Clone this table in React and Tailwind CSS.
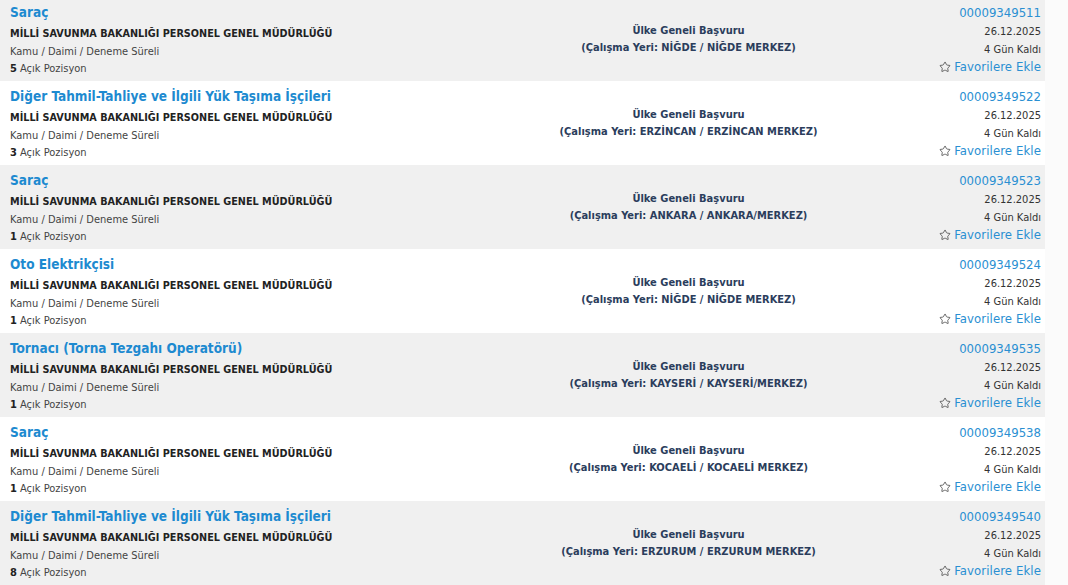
import React from "react";
import { Star } from "lucide-react";

const jobs = [
  { title: "Saraç", count: 5, place: "NİĞDE / NİĞDE MERKEZ", no: "00009349511" },
  { title: "Diğer Tahmil-Tahliye ve İlgili Yük Taşıma İşçileri", count: 3, place: "ERZİNCAN / ERZİNCAN MERKEZ", no: "00009349522" },
  { title: "Saraç", count: 1, place: "ANKARA / ANKARA/MERKEZ", no: "00009349523" },
  { title: "Oto Elektrikçisi", count: 1, place: "NİĞDE / NİĞDE MERKEZ", no: "00009349524" },
  { title: "Tornacı (Torna Tezgahı Operatörü)", count: 1, place: "KAYSERİ / KAYSERİ/MERKEZ", no: "00009349535" },
  { title: "Saraç", count: 1, place: "KOCAELİ / KOCAELİ MERKEZ", no: "00009349538" },
  { title: "Diğer Tahmil-Tahliye ve İlgili Yük Taşıma İşçileri", count: 8, place: "ERZURUM / ERZURUM MERKEZ", no: "00009349540" },
];

function JobRow({ job, shaded }) {
  return (
    <div
      className={
        "grid grid-cols-[520px_317px_1fr] h-[84px] pl-[10px] pr-[4px] pt-[6px] " +
        (shaded ? "bg-[#f0f0f0]" : "bg-white")
      }
    >
      {/* Left: title and employer */}
      <div className="flex flex-col">
        <a href="#" className="text-[13.5px] leading-[19px] font-bold text-[#1d8ad0] h-[20px]">
          {job.title}
        </a>
        <div className="text-[10.75px] leading-[19px] font-bold text-[#222] pt-[1px]">
          MİLLİ SAVUNMA BAKANLIĞI PERSONEL GENEL MÜDÜRLÜĞÜ
        </div>
        <div className="text-[11px] leading-[17px] text-[#444]">Kamu / Daimi / Deneme Süreli</div>
        <div className="text-[11px] leading-[18px] text-[#444]">
          <span className="font-bold text-[#222]">{job.count}</span> Açık Pozisyon
        </div>
      </div>

      {/* Middle: location */}
      <div className="flex flex-col items-center pt-[19px] text-[11px] leading-[17px] font-bold text-[#2b3d5c]">
        <div>Ülke Geneli Başvuru</div>
        <div>(Çalışma Yeri: {job.place})</div>
      </div>

      {/* Right: number, date, favourites */}
      <div className="flex flex-col items-end">
        <a href="#" className="text-[13px] leading-[19px] text-[#2a8fd2] h-[20px]">{job.no}</a>
        <div className="text-[11px] leading-[17px] text-[#333]">26.12.2025</div>
        <div className="text-[11px] leading-[17px] text-[#333] pt-[1px]">4 Gün Kaldı</div>
        <a href="#" className="flex items-center gap-[3px] text-[13px] leading-[17px] text-[#2a8fd2] tracking-[0.1px]">
          <Star size={12} strokeWidth={1.6} className="text-[#444]" />
          Favorilere Ekle
        </a>
      </div>
    </div>
  );
}

export default function App() {
  return (
    <div
      className="w-[1068px] h-[585px] overflow-hidden bg-[#fbfbfb]"
      style={{ fontFamily: '"DejaVu Sans Condensed", "DejaVu Sans", sans-serif' }}
    >
      <div className="w-[1045px] -mt-[3px]">
        {jobs.map((job, i) => (
          <JobRow key={job.no} job={job} shaded={i % 2 === 0} />
        ))}
      </div>
    </div>
  );
}
